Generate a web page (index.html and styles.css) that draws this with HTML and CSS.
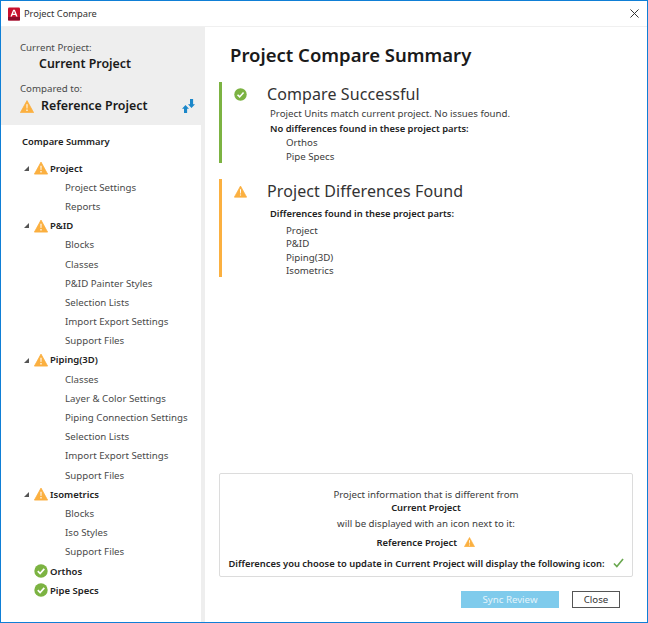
FILE: index.html
```html
<!DOCTYPE html>
<html lang="en">
<head>
<meta charset="utf-8">
<title>Project Compare</title>
<link rel="stylesheet" href="styles.css">
</head>
<body>
<svg class="defs" width="0" height="0" aria-hidden="true">
  <symbol id="warn" viewBox="0 0 14 13">
    <path d="M7 .6 13.6 12.6H.4Z" fill="#fbb040" stroke="#fbb040" stroke-width=".8" stroke-linejoin="round"/>
    <path d="M6.4 4.2h1.2l-.2 4.4h-.8ZM6.4 9.6h1.2v1.3H6.4Z" fill="#fff"/>
  </symbol>
  <symbol id="ok" viewBox="0 0 14 14">
    <circle cx="7" cy="7" r="6.7" fill="#7cb342"/>
    <path d="M3.8 7.2 6.1 9.6 10.3 4.9" fill="none" stroke="#fff" stroke-width="1.7"/>
  </symbol>
</svg>
<div class="window">
  <header class="titlebar">
    <svg class="app-icon" viewBox="0 0 14 15" aria-hidden="true">
      <rect width="14" height="15" rx="1.5" fill="#c8102e"/>
      <rect y="11" width="14" height="4" fill="#8e0b2a"/>
      <path d="M2.8 10.5 6 2.5h2l3.2 8H9.4L8.7 8.6H5.3l-.7 1.9ZM5.8 7.2h2.4L7 4.1Z" fill="#fff"/>
    </svg>
    <span class="title-text">Project Compare</span>
    <svg class="close-x" viewBox="0 0 10 10" aria-hidden="true">
      <path d="M.5.5 9.5 9.5M9.5.5.5 9.5" stroke="#333" stroke-width="1.1" fill="none"/>
    </svg>
  </header>
  <div class="body">
    <aside class="side">
      <div class="projects">
        <div class="proj-label">Current Project:</div>
        <div class="proj-name proj-current">Current Project</div>
        <div class="proj-label proj-label-2">Compared to:</div>
        <div class="proj-row">
          <svg class="ico-warn-lg"><use href="#warn"/></svg>
          <span class="proj-name">Reference Project</span>
          <svg class="swap" viewBox="0 0 13 14" aria-hidden="true">
            <path d="M3.5 6 7 9.8H5.1V14H2V9.8H0Z" fill="#1b87c9"/>
            <path d="M9.5 9 13 5.2H11.1V0H8V5.2H6Z" fill="#1b87c9"/>
          </svg>
        </div>
      </div>
      <nav class="tree">
        <div class="tree-head">Compare Summary</div>
        <div class="row top"><i class="caret"></i><svg class="ico"><use href="#warn"/></svg><b>Project</b></div>
        <div class="row leaf">Project Settings</div>
        <div class="row leaf">Reports</div>
        <div class="row top"><i class="caret"></i><svg class="ico"><use href="#warn"/></svg><b>P&amp;ID</b></div>
        <div class="row leaf">Blocks</div>
        <div class="row leaf">Classes</div>
        <div class="row leaf">P&amp;ID Painter Styles</div>
        <div class="row leaf">Selection Lists</div>
        <div class="row leaf">Import Export Settings</div>
        <div class="row leaf">Support Files</div>
        <div class="row top"><i class="caret"></i><svg class="ico"><use href="#warn"/></svg><b>Piping(3D)</b></div>
        <div class="row leaf">Classes</div>
        <div class="row leaf">Layer &amp; Color Settings</div>
        <div class="row leaf">Piping Connection Settings</div>
        <div class="row leaf">Selection Lists</div>
        <div class="row leaf">Import Export Settings</div>
        <div class="row leaf">Support Files</div>
        <div class="row top"><i class="caret"></i><svg class="ico"><use href="#warn"/></svg><b>Isometrics</b></div>
        <div class="row leaf">Blocks</div>
        <div class="row leaf">Iso Styles</div>
        <div class="row leaf">Support Files</div>
        <div class="row top"><i class="caret none"></i><svg class="ico"><use href="#ok"/></svg><b>Orthos</b></div>
        <div class="row top"><i class="caret none"></i><svg class="ico"><use href="#ok"/></svg><b>Pipe Specs</b></div>
      </nav>
    </aside>
    <main class="main">
      <h1 class="main-title">Project Compare Summary</h1>
      <section class="result result-ok">
        <svg class="result-ico"><use href="#ok"/></svg>
        <div class="result-body">
          <h2 class="result-title">Compare Successful</h2>
          <p class="line">Project Units match current project. No issues found.</p>
          <p class="line strong">No differences found in these project parts:</p>
          <ul class="parts">
            <li>Orthos</li>
            <li>Pipe Specs</li>
          </ul>
        </div>
      </section>
      <section class="result result-warn">
        <svg class="result-ico"><use href="#warn"/></svg>
        <div class="result-body">
          <h2 class="result-title">Project Differences Found</h2>
          <p class="line strong gap-b">Differences found in these project parts:</p>
          <ul class="parts">
            <li>Project</li>
            <li>P&amp;ID</li>
            <li>Piping(3D)</li>
            <li>Isometrics</li>
          </ul>
        </div>
      </section>
      <div class="spacer"></div>
      <section class="legend">
        <p>Project information that is different from</p>
        <p class="strong">Current Project</p>
        <p class="legend-gap-a">will be displayed with an icon next to it:</p>
        <p class="strong legend-ref">Reference Project <svg class="ico-sm"><use href="#warn"/></svg></p>
        <p class="strong legend-gap-b">Differences you choose to update in Current Project will display the following icon:<svg class="tick" viewBox="0 0 12 11" aria-hidden="true"><path d="M1 6 4.2 9.4 11 1.2" fill="none" stroke="#6aa84f" stroke-width="1.8"/></svg></p>
      </section>
      <div class="actions">
        <button class="btn btn-primary" type="button" disabled>Sync Review</button>
        <button class="btn btn-close" type="button">Close</button>
      </div>
    </main>
  </div>
</div>
</body>
</html>
```
FILE: styles.css
```css
* { box-sizing: border-box; }
html, body { margin: 0; padding: 0; }
body {
  width: 648px;
  height: 623px;
  overflow: hidden;
  font-family: "Noto Sans", "Open Sans", sans-serif;
  font-size: 9.7px;
  color: #3c3c3c;
  background: #fff;
}
.defs { display: block; height: 0; }
.window {
  width: 648px;
  height: 623px;
  border: 1px solid #0f7fd6;
  display: flex;
  flex-direction: column;
}
.titlebar {
  height: 26px;
  flex: none;
  display: flex;
  align-items: center;
  padding: 0 8px 0 7px;
  background: #fff;
  border-bottom: 1px solid #f0f0f0;
}
.app-icon { width: 12px; height: 14px; margin-right: 4px; }
.title-text { font-size: 9.3px; color: #333; flex: 1; }
.close-x { width: 9px; height: 9px; }
.body { flex: 1; display: flex; min-height: 0; }

.side { width: 204px; flex: none; display: flex; flex-direction: column; background: #eeeeee; }
.projects { height: 98px; flex: none; padding: 14px 0 0 19px; }
.proj-label { font-size: 9.7px; line-height: 14px; color: #4a4a4a; }
.proj-label-2 { margin-top: 9px; }
.proj-name { font-size: 12.4px; font-weight: 600; line-height: 18px; color: #1a1a1a; }
.proj-current { margin-left: 19px; }
.proj-row { display: flex; align-items: center; margin-top: 1px; }
.ico-warn-lg { width: 14px; height: 13px; margin-right: 7px; }
.swap { width: 13px; height: 14px; margin-left: 35px; }

.tree { width: 200px; flex: 1; background: #fff; padding: 7px 0 0 21px; }
.tree-head { font-size: 9.4px; font-weight: 600; color: #222; line-height: 19.2px; margin-bottom: 7.4px; }
.row { height: 19.2px; display: flex; align-items: center; line-height: 19.2px; white-space: nowrap; }
.row b { font-size: 9.5px; font-weight: 600; color: #222; }
.leaf { padding-left: 43px; color: #4a4a4a; }
.caret {
  width: 0; height: 0; margin-left: 2px; margin-right: 5px;
  border-style: solid;
  border-width: 0 0 5px 5px;
  border-color: transparent transparent #555 transparent;
}
.caret.none { border-color: transparent; }
.ico { width: 14px; height: 14px; margin-right: 2px; }

.main { flex: 1; display: flex; flex-direction: column; padding: 0 14px 14px 14px; min-width: 0; }
.main-title { margin: 14px 0 13px 11px; font-size: 18.5px; font-weight: 600; line-height: 28px; color: #1a1a1a; }
.result { display: flex; border-left: 3px solid; padding-left: 12px; margin-bottom: 16px; }
.result-ok { border-color: #7cb342; height: 81px; }
.result-warn { border-color: #fbb040; height: 98px; }
.result-ico { width: 13px; height: 13px; margin-top: 6px; flex: none; }
.result-body { margin-left: 20px; }
.result-title { margin: 0; font-size: 16px; font-weight: 400; line-height: 24px; color: #333; letter-spacing: .1px; }
.line { margin: 0 0 0 3px; line-height: 15px; }
.strong { font-size: 9.4px; font-weight: 600; color: #222; }
.result-warn .line { margin-top: 3px; }
.gap-b { margin-bottom: 3px; }
.parts { list-style: none; margin: 0; padding: 0 0 0 19px; line-height: 13.4px; }
.result-ok .parts { line-height: 14px; }
.spacer { flex: 1; }
.legend {
  height: 104px;
  flex: none;
  border: 1px solid #dcdcdc;
  border-radius: 2px;
  text-align: center;
  padding: 14px 0 0;
  line-height: 13px;
}
.legend p { margin: 0; white-space: nowrap; }
.legend .legend-gap-a { margin-top: 3px; }
.legend .legend-ref { margin-top: 6px; }
.legend .legend-gap-b { margin-top: 8px; }
.ico-sm { width: 11px; height: 10px; margin-left: 5px; vertical-align: -1px; }
.tick { width: 11px; height: 10px; margin-left: 8px; vertical-align: -1px; }
.actions { display: flex; justify-content: flex-end; gap: 13px; margin-top: 14px; padding-right: 13px; }
.btn { height: 17px; font: inherit; padding: 0; line-height: 14px; border-radius: 0; }
.btn-primary { width: 98px; background: #7fcbec; border: 0; color: #e4f4fb; }
.btn-close { width: 48px; background: #fff; border: 1px solid #555; color: #333; }
```
